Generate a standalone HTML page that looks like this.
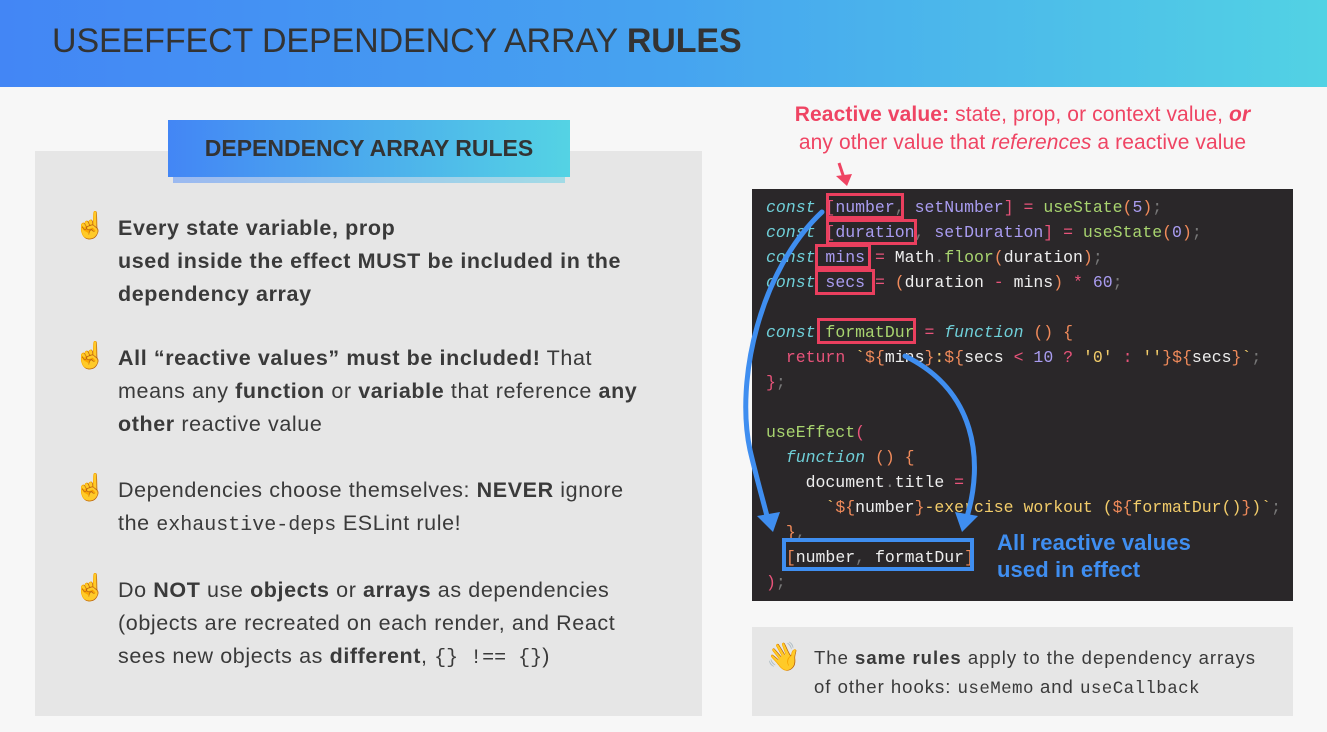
<!DOCTYPE html>
<html><head><meta charset="utf-8"><style>
*{margin:0;padding:0;box-sizing:border-box}
body{width:1327px;height:732px;background:#f7f7f7;position:relative;overflow:hidden;font-family:"Liberation Sans",sans-serif;color:#3a3a3a}
.hdr{position:absolute;left:0;top:0;width:1327px;height:87px;background:linear-gradient(90deg,#4386f5,#46a3f0 50%,#52d2e4)}
.hdr h1{position:absolute;left:52px;top:22px;font-size:34px;font-weight:normal;color:#333;letter-spacing:-0.1px;white-space:nowrap}
.card{position:absolute;left:35px;top:151px;width:667px;height:565px;background:#e6e6e6}
.badge-sh{position:absolute;left:173px;top:130px;width:392px;height:53px;background:linear-gradient(90deg,#9bb9f0,#a2dbe6)}
.badge{position:absolute;left:168px;top:120px;width:402px;height:57px;background:linear-gradient(90deg,#4386f5,#54d3e4);font-weight:bold;font-size:23px;color:#333;text-align:center;line-height:57px;letter-spacing:0px}
.b{position:absolute;left:118px;font-size:21.5px;line-height:33px;width:590px;white-space:nowrap;letter-spacing:0.6px}
.e{position:absolute;left:74px;font-size:26px;font-family:"DejaVu Sans",sans-serif}
.mono{font-family:"Liberation Mono",monospace;font-size:20px;letter-spacing:0}
.red{position:absolute;left:752px;width:541px;text-align:center;color:#ef4463;font-size:21px;line-height:28px;top:101px;letter-spacing:0.1px;white-space:nowrap}
.code{position:absolute;left:752px;top:189px;width:541px;height:412px;background:#2a2729}
.ln{position:absolute;left:766px;font-family:"Liberation Mono",monospace;font-size:16.5px;line-height:25px;white-space:pre;color:#eee}
.k{color:#6fcfd8;font-style:italic}.v{color:#a99cf0}.p{color:#e8537a}.f{color:#a8d46f}.s{color:#f2cc6a}.o{color:#f08a5a}.g{color:#777}
.bx{position:absolute;border:3px solid #ea3f5e}
.note{position:absolute;left:752px;top:627px;width:541px;height:89px;background:#e6e6e6}
</style></head><body>
<div class="hdr"><h1>USEEFFECT DEPENDENCY ARRAY <b>RULES</b></h1></div>
<div class="card"></div>
<div class="badge-sh"></div>
<div class="badge">DEPENDENCY ARRAY RULES</div>

<div class="e" style="top:211px">☝️</div>
<div class="b" style="top:212px;font-weight:bold">Every state variable, prop<br>used inside the effect MUST be included in the<br>dependency array</div>
<div class="e" style="top:341px">☝️</div>
<div class="b" style="top:342px"><b>All “reactive values” must be included!</b> That<br>means any <b>function</b> or <b>variable</b> that reference <b>any</b><br><b>other</b> reactive value</div>
<div class="e" style="top:473px">☝️</div>
<div class="b" style="top:474px">Dependencies choose themselves: <b>NEVER</b> ignore<br>the <span class="mono">exhaustive-deps</span> ESLint rule!</div>
<div class="e" style="top:573px">☝️</div>
<div class="b" style="top:574px">Do <b>NOT</b> use <b>objects</b> or <b>arrays</b> as dependencies<br>(objects are recreated on each render, and React<br>sees new objects as <b>different</b>, <span class="mono">{} !== {}</span>)</div>

<div class="red"><b>Reactive value:</b> state, prop, or context value, <b><i>or</i></b><br>any other value that <i>references</i> a reactive value</div>

<div class="code"></div>
<div class="ln" style="top:195px"><span class="k">const</span> <span class="p">[</span><span class="v">number</span><span class="g">,</span> <span class="v">setNumber</span><span class="p">]</span> <span class="p">=</span> <span class="f">useState</span><span class="o">(</span><span class="v">5</span><span class="o">)</span><span class="g">;</span></div>
<div class="ln" style="top:220px"><span class="k">const</span> <span class="p">[</span><span class="v">duration</span><span class="g">,</span> <span class="v">setDuration</span><span class="p">]</span> <span class="p">=</span> <span class="f">useState</span><span class="o">(</span><span class="v">0</span><span class="o">)</span><span class="g">;</span></div>
<div class="ln" style="top:245px"><span class="k">const</span> <span class="v">mins</span> <span class="p">=</span> Math<span class="g">.</span><span class="f">floor</span><span class="o">(</span>duration<span class="o">)</span><span class="g">;</span></div>
<div class="ln" style="top:270px"><span class="k">const</span> <span class="v">secs</span> <span class="p">=</span> <span class="o">(</span>duration <span class="p">-</span> mins<span class="o">)</span> <span class="p">*</span> <span class="v">60</span><span class="g">;</span></div>
<div class="ln" style="top:320px"><span class="k">const</span> <span class="f">formatDur</span> <span class="p">=</span> <span class="k">function</span> <span class="o">() {</span></div>
<div class="ln" style="top:345px">  <span class="p">return</span> <span class="s">`</span><span class="o">${</span>mins<span class="o">}</span><span class="s">:</span><span class="o">${</span>secs <span class="p">&lt;</span> <span class="v">10</span> <span class="p">?</span> <span class="s">'0'</span> <span class="p">:</span> <span class="s">''</span><span class="o">}${</span>secs<span class="o">}</span><span class="s">`</span><span class="g">;</span></div>
<div class="ln" style="top:370px"><span class="p">}</span><span class="g">;</span></div>
<div class="ln" style="top:420px"><span class="f">useEffect</span><span class="p">(</span></div>
<div class="ln" style="top:445px">  <span class="k">function</span> <span class="o">() {</span></div>
<div class="ln" style="top:470px">    document<span class="g">.</span>title <span class="p">=</span></div>
<div class="ln" style="top:495px">      <span class="s">`</span><span class="o">${</span>number<span class="o">}</span><span class="s">-exercise workout (</span><span class="o">${</span><span class="s">formatDur()</span><span class="o">}</span><span class="s">)`</span><span class="g">;</span></div>
<div class="ln" style="top:520px">  <span class="o">}</span><span class="g">,</span></div>
<div class="ln" style="top:545px">  <span class="o">[</span>number<span class="g">,</span> formatDur<span class="o">]</span></div>
<div class="ln" style="top:570px"><span class="p">)</span><span class="g">;</span></div>

<div class="bx" style="left:826px;top:193px;width:78px;height:26px"></div>
<div class="bx" style="left:826px;top:219px;width:91px;height:26px"></div>
<div class="bx" style="left:815px;top:244px;width:56px;height:25px"></div>
<div class="bx" style="left:815px;top:269px;width:60px;height:26px"></div>
<div class="bx" style="left:817px;top:318px;width:99px;height:26px"></div>
<div style="position:absolute;left:782px;top:538px;width:192px;height:33px;border:4px solid #3f8ef0"></div>

<svg style="position:absolute;left:0;top:0" width="1327" height="732">
<g fill="none" stroke="#3f8ef0" stroke-width="5" stroke-linecap="round">
<path d="M822,212 C760,270 735,380 750,450 C757,480 763,500 768,520"/>
<path d="M905,356 C975,390 985,460 966,520"/>
</g>
<polygon points="757,516 780,512 773,532" fill="#3f8ef0"/>
<polygon points="955,512 978,516 962,532" fill="#3f8ef0"/>
<path d="M839,163 L844,178" stroke="#ef4463" stroke-width="3"/>
<polygon points="836,176 852,174 847,186" fill="#ef4463"/>
</svg>
<div style="position:absolute;left:997px;top:529px;color:#3f8ef0;font-weight:bold;font-size:22px;line-height:27px;letter-spacing:0.1px">All reactive values<br>used in effect</div>

<div class="note"></div>
<div style="position:absolute;left:766px;top:640px;font-size:28px;font-family:'DejaVu Sans',sans-serif">👋</div>
<div style="position:absolute;left:814px;top:643px;font-size:18.5px;line-height:29px;white-space:nowrap;letter-spacing:1px">The <b>same rules</b> apply to the dependency arrays<br>of other hooks: <span class="mono" style="font-size:17.5px;letter-spacing:0.4px">useMemo</span> and <span class="mono" style="font-size:17.5px;letter-spacing:0.4px">useCallback</span></div>
</body></html>
